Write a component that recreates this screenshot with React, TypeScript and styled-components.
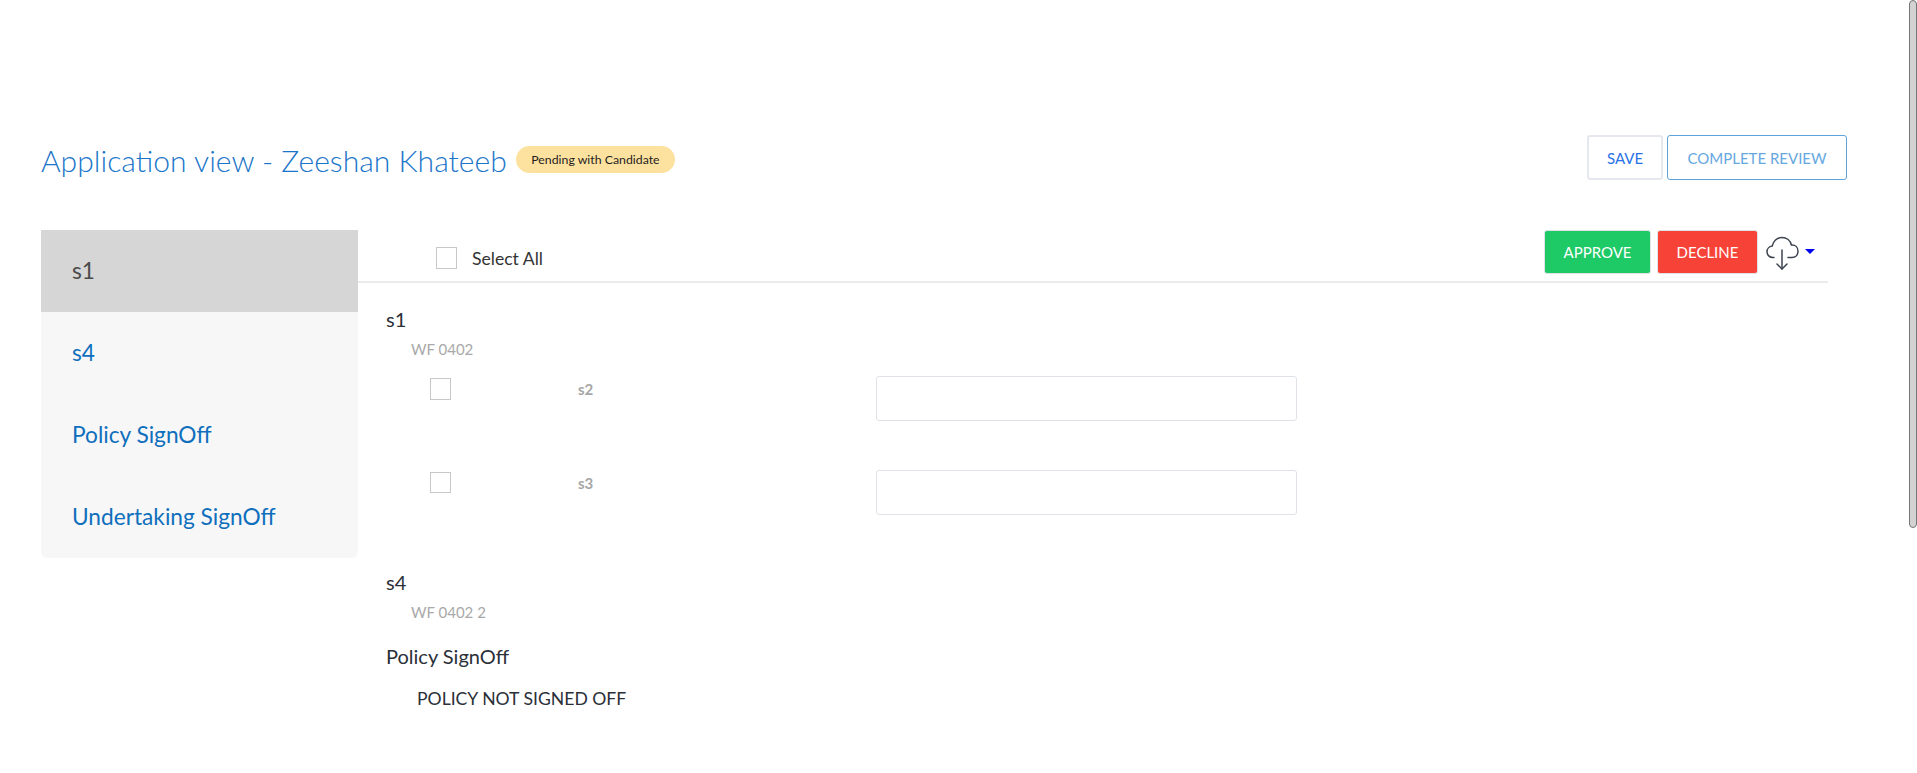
import React from "react";
import styled, { createGlobalStyle } from "styled-components";

const Global = createGlobalStyle`
  html, body { margin: 0; padding: 0; background: #fff; overflow: hidden; }
  body { font-family: "Lato", "Liberation Sans", sans-serif; }
`;

const Page = styled.div`
  height: 773px;
  box-sizing: border-box;
  padding: 135px 70px 0 41px;
`;

const Header = styled.header`
  display: flex;
  justify-content: space-between;
  align-items: center;
  height: 45px;
`;

const TitleGroup = styled.div`
  display: flex;
  align-items: center;
  gap: 9px;
  padding-top: 4px;
`;

const Title = styled.h1`
  margin: 0;
  font-size: 30.1px;
  font-weight: 300;
  line-height: 36px;
  color: #1b75c9;
`;

const Badge = styled.span`
  display: flex;
  align-items: center;
  height: 27px;
  padding: 0 15.5px;
  border-radius: 14px;
  background: #fde29f;
  color: #1d1d1d;
  font-size: 12.3px;
`;

const HeaderActions = styled.div`
  display: flex;
  gap: 4px;
`;

const OutlineButton = styled.button<{ $primary?: boolean }>`
  height: 45px;
  box-sizing: border-box;
  padding: 0;
  width: ${(p) => (p.$primary ? "180px" : "76px")};
  background: #fff;
  border: ${(p) => (p.$primary ? "1px solid #5fa3d8" : "2px solid #e6e8f0")};
  border-radius: 3px;
  color: ${(p) => (p.$primary ? "#66a8de" : "#2a72e6")};
  font-family: inherit;
  font-size: 15px;
`;

const Body = styled.div`
  display: flex;
  margin-top: 50px;
  align-items: flex-start;
`;

const Sidebar = styled.nav`
  width: 317px;
  flex: none;
  background: #f7f7f7;
  border-radius: 0 0 6px 6px;
  overflow: hidden;
`;

const SideItem = styled.div<{ $active?: boolean }>`
  display: flex;
  align-items: center;
  height: 82px;
  padding: 0 0 2px 31px;
  box-sizing: border-box;
  font-size: 22.7px;
  background: ${(p) => (p.$active ? "#d6d6d6" : "transparent")};
  color: ${(p) => (p.$active ? "#4a4a4a" : "#0f6fbd")};
`;

const Main = styled.main`
  flex: 1;
  min-width: 0;
  margin-right: 19px;
`;

const Toolbar = styled.div`
  display: flex;
  justify-content: space-between;
  height: 51px;
  padding: 0 13px 0 78px;
  border-bottom: 2px solid #ebebeb;
`;

const SelectAll = styled.label`
  display: flex;
  align-items: center;
  gap: 15px;
  height: 40px;
  margin-top: 8px;
  align-self: flex-start;
  font-size: 17.6px;
  color: #333;
`;

const Check = styled.span<{ $short?: boolean }>`
  display: block;
  box-sizing: border-box;
  width: 21px;
  height: ${(p) => (p.$short ? "21px" : "22px")};
  background: #fff;
  border: 1px solid #c8c8c8;
`;

const ToolActions = styled.div`
  display: flex;
  align-items: flex-start;
`;

const SolidButton = styled.button<{ $bg: string; $w: number }>`
  height: 44px;
  width: ${(p) => p.$w}px;
  box-sizing: border-box;
  margin-right: ${(p) => (p.$w === 107 ? "6px" : "8px")};
  padding: 0;
  background: ${(p) => p.$bg};
  border: 1px solid #dfe3e8;
  border-radius: 3px;
  color: #fff;
  font-family: inherit;
  font-size: 15px;
`;

const Download = styled.div`
  display: flex;
  align-items: center;
  gap: 6px;
  margin-top: 5px;
  height: 36px;
`;

const Caret = styled.span`
  width: 0;
  height: 0;
  margin-top: -3px;
  border-left: 5px solid transparent;
  border-right: 5px solid transparent;
  border-top: 5px solid #0000f0;
`;

const Section = styled.section<{ $top: number }>`
  margin-top: ${(p) => p.$top}px;
  padding-left: 28px;
`;

const SectionTitle = styled.h2`
  margin: 0;
  font-size: 20px;
  font-weight: 400;
  line-height: 24px;
  color: #2b2f38;
`;

const Sub = styled.div<{ $gap?: number }>`
  margin: ${(p) => p.$gap ?? 8}px 0 0 25px;
  font-size: 15px;
  line-height: 20px;
  color: #a9a9a9;
`;

const FieldRow = styled.div<{ $top: number }>`
  display: grid;
  grid-template-columns: 148px 298px 421px;
  align-items: start;
  height: 45px;
  margin-top: ${(p) => p.$top}px;
  padding-left: 44px;
`;

const CheckCell = styled.div`
  padding-top: 2px;
`;

const FieldLabel = styled.div`
  font-size: 15px;
  font-weight: 700;
  line-height: 20px;
  margin-top: 3px;
  color: #a6a6a6;
`;

const FieldInput = styled.input`
  display: block;
  box-sizing: border-box;
  width: 421px;
  height: 45px;
  background: #fff;
  border: 1px solid #dfe3e8;
  border-radius: 3px;
`;

const Notice = styled.div`
  margin: 19px 0 0 31px;
  font-size: 17.6px;
  line-height: 24px;
  color: #2b2f38;
`;

const ScrollThumb = styled.div`
  position: fixed;
  top: 0;
  right: 0;
  width: 8px;
  height: 528px;
  box-sizing: border-box;
  background: #d2d2d2;
  border: 1px solid #777;
  border-radius: 5px;
`;

const CloudIcon = () => (
  <svg width="33" height="36" viewBox="0 0 33 36" fill="none" stroke="#3d4450" strokeWidth="1.5" strokeLinecap="round" strokeLinejoin="round">
    <path d="M8 22.5H7C3.6 22.5 1 20 1 16.8C1 13.8 3.2 11.4 6.2 11.1C7 6.2 11 2.5 16 2.5C20.6 2.5 24.4 5.6 25.4 10C25.6 10 25.8 10 26 10C29.6 10 32 12.6 32 16.2C32 19.8 29.6 22.5 26 22.5H22" />
    <path d="M16 15V34" />
    <path d="M11 29L16 34L21 29" />
  </svg>
);

export default function App() {
  return (
    <>
      <Global />
      <Page>
        <Header>
          <TitleGroup>
            <Title>Application view - Zeeshan Khateeb</Title>
            <Badge>Pending with Candidate</Badge>
          </TitleGroup>
          <HeaderActions>
            <OutlineButton>SAVE</OutlineButton>
            <OutlineButton $primary>COMPLETE REVIEW</OutlineButton>
          </HeaderActions>
        </Header>
        <Body>
          <Sidebar>
            <SideItem $active>s1</SideItem>
            <SideItem>s4</SideItem>
            <SideItem>Policy SignOff</SideItem>
            <SideItem>Undertaking SignOff</SideItem>
          </Sidebar>
          <Main>
            <Toolbar>
              <SelectAll>
                <Check />
                Select All
              </SelectAll>
              <ToolActions>
                <SolidButton $bg="#1dca66" $w={107}>APPROVE</SolidButton>
                <SolidButton $bg="#f74237" $w={101}>DECLINE</SolidButton>
                <Download>
                  <CloudIcon />
                  <Caret />
                </Download>
              </ToolActions>
            </Toolbar>
            <Section $top={24}>
              <SectionTitle>s1</SectionTitle>
              <Sub>WF 0402</Sub>
            </Section>
            <Section $top={0}>
              <FieldRow $top={17}>
                <CheckCell><Check /></CheckCell>
                <FieldLabel>s2</FieldLabel>
                <FieldInput />
              </FieldRow>
              <FieldRow $top={49}>
                <CheckCell><Check $short /></CheckCell>
                <FieldLabel>s3</FieldLabel>
                <FieldInput />
              </FieldRow>
            </Section>
            <Section $top={55}>
              <SectionTitle>s4</SectionTitle>
              <Sub>WF 0402 2</Sub>
            </Section>
            <Section $top={22}>
              <SectionTitle>Policy SignOff</SectionTitle>
              <Notice>POLICY NOT SIGNED OFF</Notice>
            </Section>
          </Main>
        </Body>
      </Page>
      <ScrollThumb />
    </>
  );
}
